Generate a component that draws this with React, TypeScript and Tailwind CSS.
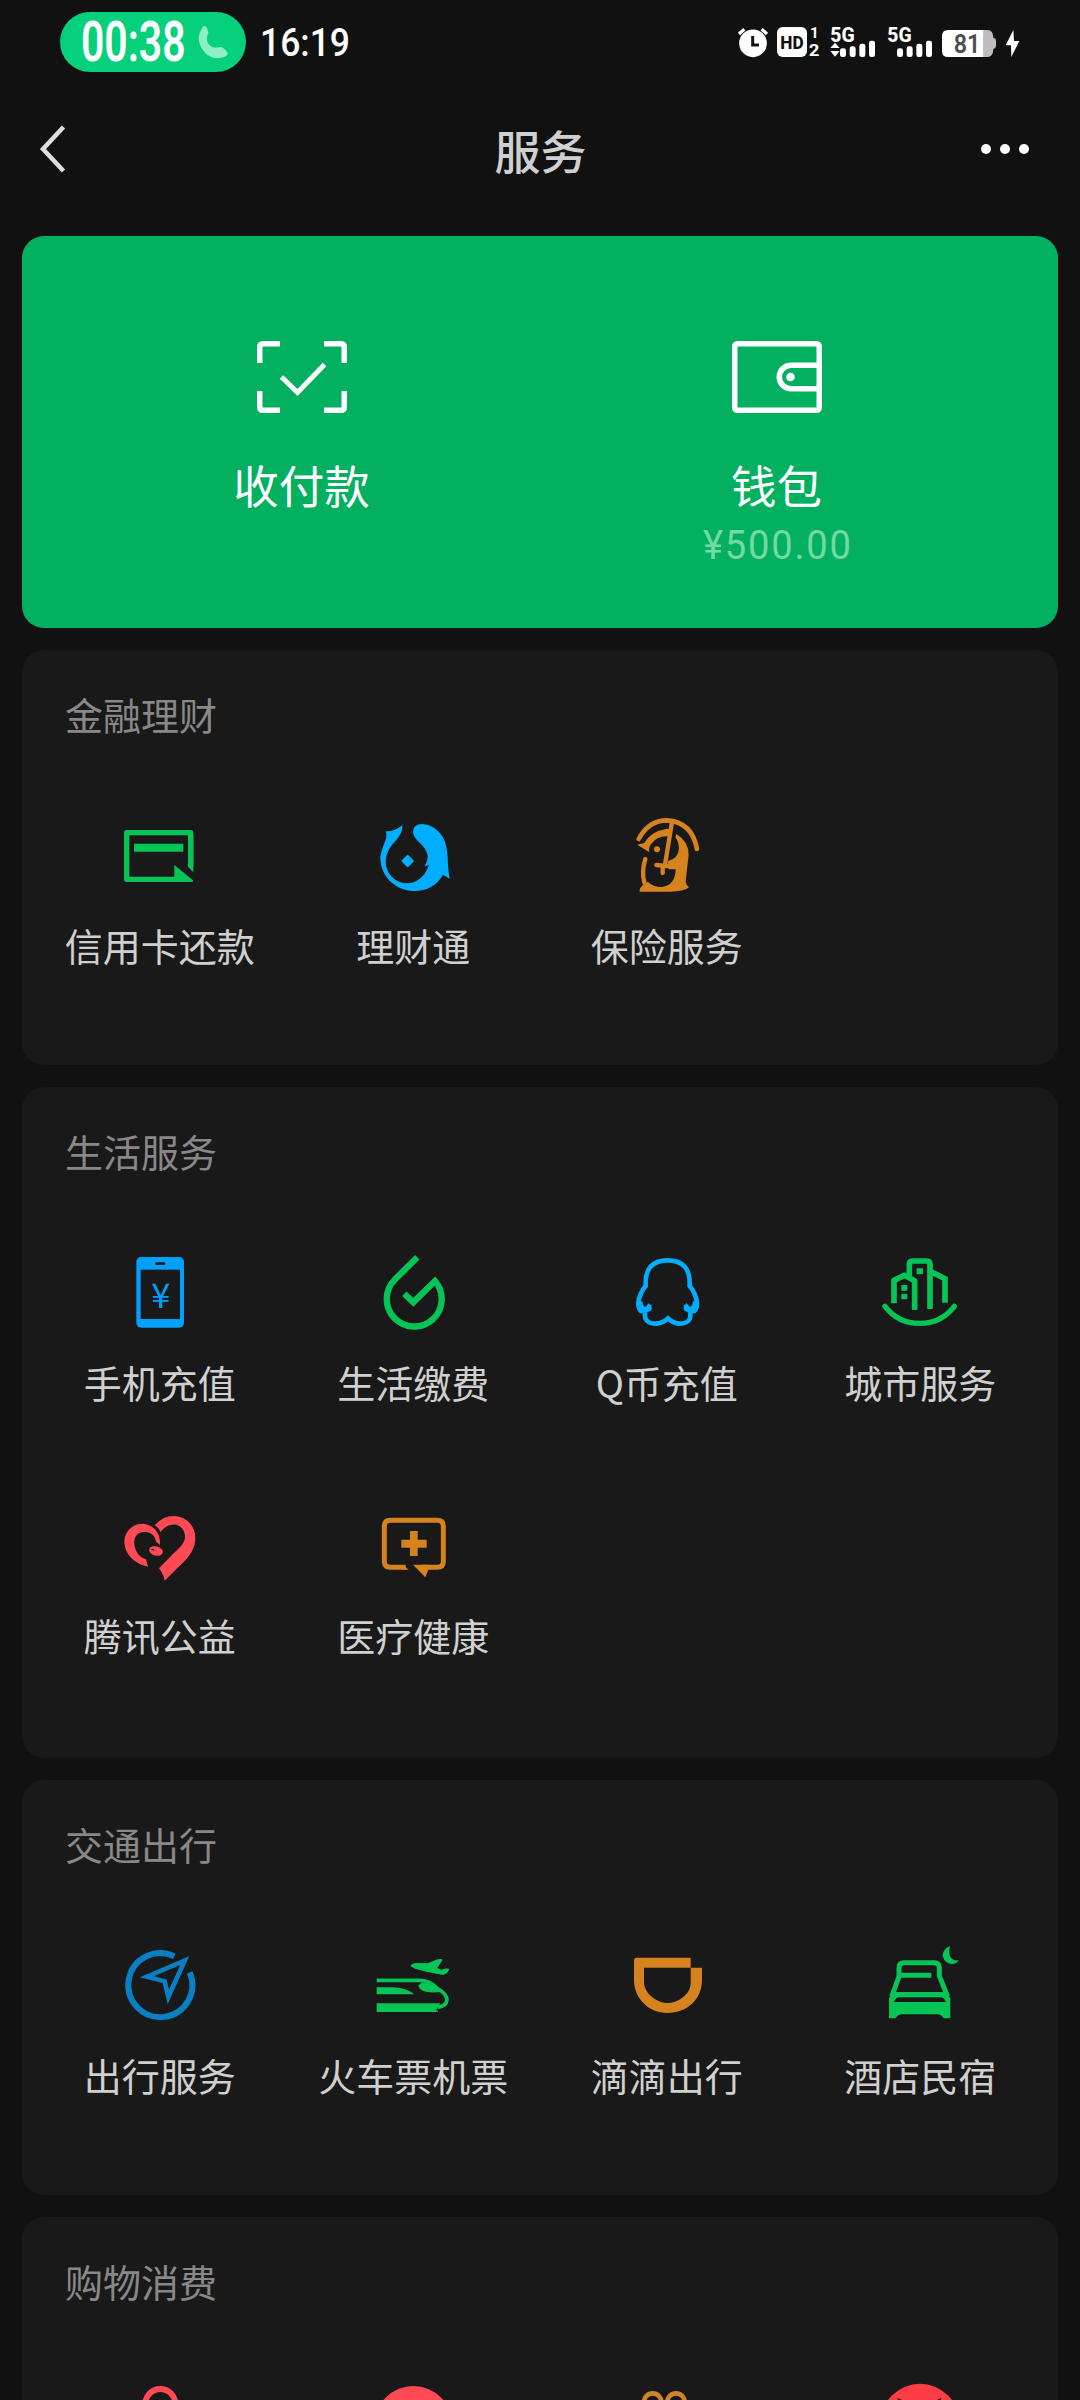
import type { ReactNode } from "react";

interface Service {
  label: string;
  icon: ReactNode;
}

interface SectionProps {
  title: string;
  items: Service[];
  className: string;
}

const GREEN = "#06c456";
const BLUE = "#00aeff";
const ORANGE = "#d6831f";
const RED = "#ff4a55";
const CARD = "#191919";

/** 80px glyph box; the drawings inside use a 240-unit grid. */
function Glyph({ x = 0, y = 0, children }: { x?: number; y?: number; children: ReactNode }) {
  return (
    <svg viewBox="0 0 240 240" className="block size-20 overflow-visible" fill="none" aria-hidden="true">
      <g transform={`translate(${-x} ${-y})`}>{children}</g>
    </svg>
  );
}

const creditCard = (
  <Glyph>
    <path d="M212 155V53H20V193H180" stroke={GREEN} strokeWidth="16" strokeLinejoin="round" />
    <path d="M204 54V155L220 172V60Z" fill={GREEN} />
    <path d="M42 86H190V110H42Z" fill={GREEN} />
    <path d="M163 150L219 196Q221 201 214 201H160V186H163Z" fill={GREEN} />
  </Glyph>
);

const wealth = (
  <Glyph x={40} y={45}>
    <path
      d="M78 94Q106 95 128 75Q130 98 108 122Q78 152 78 185A65 65 0 0 0 143 250Q188 248 208 195L194 199Q205 182 204 168Q202 148 180 128Q160 112 160 94Q162 72 188 72Q225 74 250 112Q264 135 265 195Q266 215 270 236L250 224Q222 272 163 273C105 272 62 228 62 172Q64 155 74 130Q84 108 78 94Z"
      fill={BLUE}
    />
    <path d="M144 168L159 183L144 198L129 183Z" fill={BLUE} stroke={BLUE} strokeWidth="7" strokeLinejoin="round" />
  </Glyph>
);

const insurance = (
  <Glyph x={800} y={45}>
    <path d="M835 117Q865 61 920 61Q995 66 1010 147" stroke={ORANGE} strokeWidth="14" strokeLinecap="round" />
    <path d="M831 134L852 129Q875 88 930 86L926 109Q892 106 873 131Q864 142 867 157Z" fill={ORANGE} />
    <circle cx="890" cy="148" r="9" fill={ORANGE} />
    <path
      d="M948 102Q985 124 985 165Q980 205 976 245Q978 255 986 262Q970 275 930 275H838Q836 266 847 256L862 245Q880 262 905 261Q945 256 946 208H925L922 184Q955 175 956 145Q954 122 945 112Z"
      fill={ORANGE}
    />
    <path d="M855 177Q843 215 852 248" stroke={ORANGE} strokeWidth="13" strokeLinecap="round" />
    <path d="M935 66L914 194M888 195L940 200M907 200V219" stroke={ORANGE} strokeWidth="13" strokeLinecap="round" />
  </Glyph>
);

const phoneTopUp = (
  <Glyph x={59} y={66}>
    <rect x="108" y="81" width="143" height="212" rx="15" fill="#00a0ff" />
    <rect x="121" y="119" width="118" height="148" fill={CARD} />
    <rect x="165" y="97" width="30" height="8" rx="4" fill={CARD} />
    <text x="181" y="234" textAnchor="middle" fontSize="103" fontWeight="400" fill="#00a0ff" className="font-['Noto_Sans_CJK_SC',sans-serif]">
      ¥
    </text>
  </Glyph>
);

const utilities = (
  <Glyph x={819} y={66}>
    <path d="M952 82L884 149A82.500 82.500 0 1 0 1005 153L940 217L913 191" stroke={GREEN} strokeWidth="19" />
  </Glyph>
);

const qCoin = (
  <Glyph x={80} y={66}>
    <path
      d="M147 224L146 237Q134 244 122 243Q106 225 122 190Q127 178 136 168Q132 91 202 91Q272 91 268 168Q277 178 282 190Q298 225 282 243Q270 244 258 237L257 224"
      stroke={BLUE}
      strokeWidth="14"
    />
    <path d="M108 215Q107 248 124 249Q146 246 155 236L146 219L139 228Q129 236 126 214ZM296 215Q297 248 280 249Q258 246 249 236L258 219L265 228Q275 236 278 214Z" fill={BLUE} />
    <path d="M135 246Q128 281 168 281Q190 278 203 265Q216 278 236 281Q276 281 269 246" stroke={BLUE} strokeWidth="14" />
  </Glyph>
);

const city = (
  <Glyph x={841} y={66}>
    <path d="M856 229Q895 280 960 280Q1025 280 1064 229" stroke={GREEN} strokeWidth="16" strokeLinecap="round" />
    <path d="M883 220V151L914 136L945 152V240" stroke={GREEN} strokeWidth="17" strokeLinejoin="round" />
    <path d="M929 138V103Q929 93 939 93H981Q991 93 991 103V237M996 126L1036 146V218" stroke={GREEN} strokeWidth="17" />
    <path d="M951 115h19v18h-19zM905 165h18v17h-18zM905 191h18v17h-18z" fill={GREEN} />
  </Glyph>
);

const charity = (
  <Glyph x={179} y={45}>
    <path
      d="M283 106Q308 78 340 78C382 80 405 110 405 145C405 185 375 213 345 240L313 272Q310 253 296 235L340 190C362 168 375 158 374 138C370 96 325 92 300 127Q296 112 283 106Z"
      fill={RED}
    />
    <path
      d="M299 165L287 155C284 131 264 125 248 126C228 128 220 145 222 163C225 188 240 204 257 208L263 230C225 222 192 195 192 153C195 120 220 101 247 101C282 104 302 132 299 165Z"
      fill={RED}
    />
    <ellipse cx="287" cy="183" rx="21" ry="14" transform="rotate(14 287 183)" fill={RED} />
    <ellipse cx="277" cy="179" rx="5" ry="2" transform="rotate(25 277 179)" fill={CARD} />
  </Glyph>
);

const health = (
  <Glyph x={940} y={45}>
    <path d="M1038 232H992Q974 232 974 214V109Q974 91 992 91H1133Q1151 91 1151 109V214Q1151 232 1133 232H1085" stroke={ORANGE} strokeWidth="15" />
    <path d="M1030 224.500L1047 239.500H1030ZM1060 224.500H1106V239.500L1097 262Z" fill={ORANGE} />
    <path d="M1051 123h23v26h27v24h-27v25h-23v-25h-26v-24h26z" fill={ORANGE} />
  </Glyph>
);

const travel = (
  <Glyph x={179} y={75}>
    <path d="M342 109A96 96 0 1 0 388 157" stroke="#0a80c4" strokeWidth="18" />
    <path d="M373 122L260 170L313 184L324 231Z" stroke="#0a80c4" strokeWidth="14" />
  </Glyph>
);

const trainPlane = (
  <Glyph x={940} y={75}>
    <path
      d="M1052 138Q1058 128 1075 129L1104 130L1134 118Q1144 115 1149 119L1133 144L1146 150Q1159 143 1169 147Q1165 161 1150 165L1100 155L1066 146Z"
      fill={GREEN}
    />
    <path d="M951 181H1078Q1110 181 1132 204Q1162 222 1162 240Q1160 258 1135 262" stroke={GREEN} strokeWidth="11" />
    <path d="M1076 197Q1084 185 1105 187L1142 216Q1082 222 1076 197ZM951 202H1003Q1043 205 1063 223H951ZM951 250H1142L1130 270L1136 276H951Z" fill={GREEN} />
  </Glyph>
);

const didi = (
  <Glyph x={140} y={75}>
    <path
      d="M170 113H331V143H191V185C191 224 234 249 262 249C290 249 331 225 331 188V143H365V180C365 238 320 279 262 279C205 279 161 235 161 180V122Q161 113 170 113Z"
      fill={ORANGE}
    />
  </Glyph>
);

const hotel = (
  <Glyph x={901} y={75}>
    <path d="M1112 77Q1088 87 1089 109Q1097 134 1121 132Q1134 129 1137 121Q1118 124 1111 108Q1106 92 1112 77Z" fill={GREEN} />
    <path d="M936 230L958 170V143Q958 128 973 128H1064Q1079 128 1079 143V168L1104 230M958 166H1055" stroke={GREEN} strokeWidth="15" />
    <path
      fillRule="evenodd"
      d="M940 216H1100L1112 235V295H1092Q1085 283 1073 283H967Q955 283 948 295H928V235ZM942 246H1099Q1094 232 1080 232H961Q947 232 942 246Z"
      fill={GREEN}
    />
  </Glyph>
);

const shoppingBag = (
  <Glyph>
    <path d="M76 110V66a45 45 0 0 1 90 0V110" stroke={RED} strokeWidth="18" />
    <rect x="40" y="75" width="162" height="140" rx="18" fill={RED} />
  </Glyph>
);

const redDisc = (
  <Glyph>
    <circle cx="121" cy="129" r="117" fill={RED} />
  </Glyph>
);

const gift = (
  <Glyph>
    <circle cx="77" cy="60" r="26" stroke="#cf842b" strokeWidth="14" />
    <circle cx="147" cy="60" r="26" stroke="#cf842b" strokeWidth="14" />
  </Glyph>
);

const groupBuy = (
  <Glyph>
    <circle cx="120" cy="123" r="118" fill="#ff3d47" />
    <path d="M52 47L70 56L58 72ZM184 47L166 56L178 72Z" fill={CARD} />
  </Glyph>
);

const sections: SectionProps[] = [
  {
    title: "金融理财",
    className: "h-[415px]",
    items: [
      { label: "信用卡还款", icon: creditCard },
      { label: "理财通", icon: wealth },
      { label: "保险服务", icon: insurance },
    ],
  },
  {
    title: "生活服务",
    className: "h-[671px]",
    items: [
      { label: "手机充值", icon: phoneTopUp },
      { label: "生活缴费", icon: utilities },
      { label: "Q币充值", icon: qCoin },
      { label: "城市服务", icon: city },
      { label: "腾讯公益", icon: charity },
      { label: "医疗健康", icon: health },
    ],
  },
  {
    title: "交通出行",
    className: "h-[415px]",
    items: [
      { label: "出行服务", icon: travel },
      { label: "火车票机票", icon: trainPlane },
      { label: "滴滴出行", icon: didi },
      { label: "酒店民宿", icon: hotel },
    ],
  },
  {
    title: "购物消费",
    className: "h-[415px]",
    items: [
      { label: "", icon: shoppingBag },
      { label: "", icon: redDisc },
      { label: "", icon: gift },
      { label: "", icon: groupBuy },
    ],
  },
];

function SignalBars({ x }: { x: number }) {
  return (
    <g fill="#fff">
      <rect x={x} y="145" width="18" height="26" rx="7" />
      <rect x={x + 29} y="139" width="18" height="32" rx="7" />
      <rect x={x + 58} y="131" width="18" height="40" rx="7" />
      <rect x={x + 87} y="122" width="18" height="49" rx="7" />
    </g>
  );
}

function StatusIcons() {
  return (
    <svg viewBox="114 78 846 96" className="block h-8 w-[282px] overflow-visible font-['Roboto',sans-serif]" aria-hidden="true">
      {/* alarm */}
      <circle cx="159" cy="130" r="41.500" fill="#fff" />
      <path d="M117 102L133 88M201 102L185 88" stroke="#fff" strokeWidth="10" />
      <path d="M158 108V135H177" fill="none" stroke="#111" strokeWidth="9" />
      {/* HD voice on both SIMs */}
      <rect x="231" y="81" width="90" height="90" rx="17" fill="#fff" />
      <text x="276" y="147" textAnchor="middle" fontSize="56" fontWeight="800" textLength="70" lengthAdjust="spacingAndGlyphs" fill="#111">
        HD
      </text>
      <text x="343" y="115" textAnchor="middle" fontSize="46" fontWeight="700" fill="#fff">
        1
      </text>
      <text x="342" y="169" textAnchor="middle" fontSize="50" fontWeight="700" textLength="32" lengthAdjust="spacingAndGlyphs" fill="#fff">
        2
      </text>
      {/* SIM 1 */}
      <text x="391" y="125" fontSize="62" fontWeight="800" textLength="73" lengthAdjust="spacingAndGlyphs" fill="#fff">
        5G
      </text>
      <path d="M391 144L405 128L419 144ZM391 153H419L405 170Z" fill="#fff" />
      <SignalBars x={420} />
      {/* SIM 2 */}
      <text x="562" y="125" fontSize="62" fontWeight="800" textLength="73" lengthAdjust="spacingAndGlyphs" fill="#fff">
        5G
      </text>
      <SignalBars x={591} />
      {/* battery */}
      <path d="M851 90H863Q879 90 880 113Q888 115 888 122V138Q888 145 880 147Q879 171 863 171H851Z" fill="#bdbdbd" />
      <path d="M744 90H851V171H744Q726 171 726 153V108Q726 90 744 90Z" fill="#fff" />
      <text x="801" y="158" textAnchor="middle" fontSize="76" fontWeight="600" textLength="80" lengthAdjust="spacingAndGlyphs" fill="#4d4d4d">
        81
      </text>
      <path d="M940 90L917 136H933L934 171L958 123H942Z" fill="#fff" />
    </svg>
  );
}

function StatusBar() {
  return (
    <div className="flex h-[84px] items-center justify-between px-[60px]">
      <div className="flex items-center font-['Roboto',sans-serif] text-white">
        <div className="flex h-[60px] w-[186px] items-center rounded-full bg-[#05d07b] pl-[21px]">
          <span className="block w-[106px]">
            <span className="block origin-left scale-x-[0.73] text-[56px] leading-[60px] font-semibold">00:38</span>
          </span>
          <svg viewBox="0 0 90 100" className="ml-[10px] block h-[34px] w-[31px]" aria-hidden="true">
            <path d="M15 7Q23 -2 29 9L33 23Q26 38 30 50Q38 66 54 67L69 65Q76 65 88 80Q92 87 83 93Q50 106 24 83Q-10 45 15 7Z" fill="#8cf0c4" />
          </svg>
        </div>
        <span className="mt-px ml-[14px] block w-[100px] origin-left scale-x-[0.91] text-[39px] leading-[60px] font-medium">16:19</span>
      </div>
      <StatusIcons />
    </div>
  );
}

function NavBar() {
  return (
    <header className="flex h-[152px] items-start justify-between pt-[33px] pr-[51px] pl-[39px]">
      <div className="w-[38px]">
        <svg viewBox="0 0 28 50" className="mt-[7px] block h-[50px] w-7" fill="none" aria-hidden="true">
          <path d="M24.500 3L4 25L24.500 47" stroke="#dedede" strokeWidth="4.500" />
        </svg>
      </div>
      <h1 className="ml-[23px] text-[46px] leading-[64px] font-medium text-[#d0d0d0]">服务</h1>
      <div className="mt-[27px] flex h-[10px] gap-[9px]">
        <span className="size-[10px] rounded-full bg-white" />
        <span className="size-[10px] rounded-full bg-white" />
        <span className="size-[10px] rounded-full bg-white" />
      </div>
    </header>
  );
}

function PayCard() {
  return (
    <section className="grid h-[392px] grid-cols-2 rounded-[22px] bg-[#03b05f] pt-[105px] pr-[44px] pl-[42px] text-white">
      <div className="flex flex-col items-center">
        <svg viewBox="0 0 90 72" className="block h-[72px] w-[90px]" fill="none" stroke="#fff" strokeWidth="5.500" aria-hidden="true">
          <path d="M2.750 22V6Q2.750 2.750 6 2.750H23M67 2.750H84Q87.250 2.750 87.250 6V22M87.250 50V66Q87.250 69.250 84 69.250H67M23 69.250H6Q2.750 69.250 2.750 66V50" />
          <path d="M24.500 36L40.500 51.500L67.500 23.500" strokeWidth="5" />
        </svg>
        <p className="mt-[39px] text-[45.5px] leading-[64px]">收付款</p>
      </div>
      <div className="flex flex-col items-center">
        <svg viewBox="0 0 90 72" className="block h-[72px] w-[90px]" fill="none" stroke="#fff" strokeWidth="5.500" aria-hidden="true">
          <rect x="2.750" y="2.750" width="84.500" height="66.500" rx="2.500" />
          <path d="M87 24.250H59A11.750 11.750 0 0 0 59 47.750H87" />
          <circle cx="58.500" cy="36" r="4.300" fill="#fff" stroke="none" />
        </svg>
        <p className="mt-[39px] text-[45.5px] leading-[64px]">钱包</p>
        <div className="mt-[5px] flex w-[148px] font-['Roboto',sans-serif] text-[41px] leading-[48px] text-[#73d9a5]">
          <span className="block origin-left scale-x-[0.93] tracking-[1.9px]">¥500.00</span>
        </div>
      </div>
    </section>
  );
}

function ServiceSection({ title, items, className }: SectionProps) {
  return (
    <section className={`shrink-0 rounded-[22px] bg-[#191919] pt-[40px] ${className}`}>
      <h2 className="pl-[43px] text-[38px] leading-[48px] text-[#888888]">{title}</h2>
      <ul className="mt-[77px] grid grid-cols-4 gap-y-[97px] px-[11px]">
        {items.map((item, i) => (
          <li key={i} className="flex h-[156px] flex-col items-center">
            {item.icon}
            {item.label ? (
              <span className="mt-[26px] text-[38px] leading-[48px] whitespace-nowrap text-[#d0d0d0]">{item.label}</span>
            ) : null}
          </li>
        ))}
      </ul>
    </section>
  );
}

export default function App() {
  return (
    <div className="h-[2400px] w-[1080px] overflow-hidden bg-[#111111] font-['Noto_Sans_CJK_SC',sans-serif]">
      <StatusBar />
      <NavBar />
      <main className="flex flex-col gap-[22px] px-[22px]">
        <PayCard />
        {sections.map((section) => (
          <ServiceSection key={section.title} {...section} />
        ))}
      </main>
    </div>
  );
}
